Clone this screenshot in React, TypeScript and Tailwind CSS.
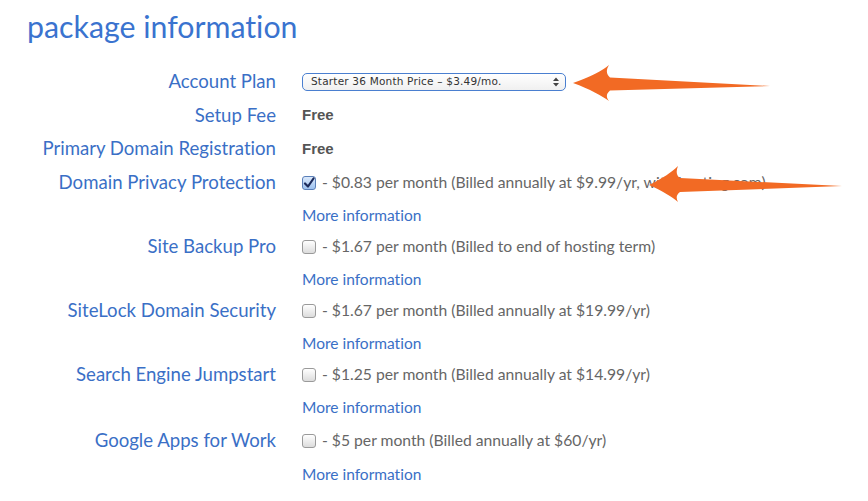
import React from "react";

const rows: { label: string; text: string; checked: boolean; extra: boolean }[] = [
  { label: "Domain Privacy Protection", text: "- $0.83 per month (Billed annually at $9.99/yr, with hosting.com)", checked: true, extra: false },
  { label: "Site Backup Pro", text: "- $1.67 per month (Billed to end of hosting term)", checked: false, extra: false },
  { label: "SiteLock Domain Security", text: "- $1.67 per month (Billed annually at $19.99/yr)", checked: false, extra: false },
  { label: "Search Engine Jumpstart", text: "- $1.25 per month (Billed annually at $14.99/yr)", checked: false, extra: false },
  { label: "Google Apps for Work", text: "- $5 per month (Billed annually at $60/yr)", checked: false, extra: true },
];

function Box({ checked }: { checked: boolean }) {
  return (
    <span
      className={
        checked
          ? "inline-flex items-center justify-center w-[14px] h-[14px] rounded-[3px] border border-[#5a7fb8] bg-gradient-to-b from-[#dbe9fb] to-[#9ec2ef] mr-[6px] shrink-0"
          : "inline-flex items-center justify-center w-[14px] h-[14px] rounded-[3px] border border-[#9a9a9a] bg-gradient-to-b from-white to-[#dcdcdc] mr-[6px] shrink-0"
      }
    >
      {checked && (
        <svg width="12" height="12" viewBox="0 0 12 12">
          <path d="M2 6.5 L5 9.5 L10.5 1.5" fill="none" stroke="#1c2a5a" strokeWidth="2.2" strokeLinecap="round" strokeLinejoin="round" />
        </svg>
      )}
    </span>
  );
}

export default function App() {
  return (
    <div className="relative w-[868px] h-[501px] bg-white overflow-hidden" style={{ fontFamily: "Lato, 'Open Sans', sans-serif", fontVariantLigatures: "none" }}>
      <h1 className="pl-[27px] pt-[5px] h-[65px] text-[30.3px] leading-[42px] text-[#3a73cf] font-normal">package information</h1>
      <div className="grid grid-cols-[276px_1fr] gap-x-[26px] text-[18.6px] text-[#3a6fc6]">
        <div className="h-[34px] flex items-center justify-end">Account Plan</div>
        <div className="h-[34px] flex items-center">
          <div className="w-[264px] h-[18px] rounded-[5px] border border-[#4a7fd0] bg-gradient-to-b from-white to-[#f0f0f0] flex items-center justify-between pl-[8px] pr-[6px] text-[11px] text-[#333]" style={{ fontFamily: "'DejaVu Sans', sans-serif" }}>
            <span className="text-[10.5px] tracking-[0.2px]">Starter 36 Month Price – $3.49/mo.</span>
            <svg width="6" height="10" viewBox="0 0 6 10"><path d="M0 4 L3 0.5 L6 4 Z M0 6 L3 9.5 L6 6 Z" fill="#444" /></svg>
          </div>
        </div>
        <div className="h-[33px] flex items-center justify-end">Setup Fee</div>
        <div className="h-[33px] flex items-center text-[15px] font-semibold text-[#555]" style={{ fontFamily: "'Liberation Sans', Arial, sans-serif" }}>Free</div>
        <div className="h-[34px] flex items-center justify-end">Primary Domain Registration</div>
        <div className="h-[34px] flex items-center text-[15px] font-semibold text-[#555]" style={{ fontFamily: "'Liberation Sans', Arial, sans-serif" }}>Free</div>
        {rows.map((r) => (
          <React.Fragment key={r.label}>
            <div className={r.extra ? "h-[35px] pt-[2px] flex items-center justify-end" : "h-[33px] flex items-center justify-end"}>{r.label}</div>
            <div className={r.extra ? "h-[35px] pt-[2px] flex items-center text-[15.7px] text-[#666] whitespace-nowrap" : "h-[33px] flex items-center text-[15.7px] text-[#666] whitespace-nowrap"}>
              <Box checked={r.checked} />
              <span>{r.text}</span>
            </div>
            <div className="h-[31px]" />
            <div className={r.extra ? "h-[31px] flex items-start text-[15.5px] text-[#3a6fc6] pt-[6px]" : "h-[31px] flex items-start text-[15.5px] text-[#3a6fc6] pt-[5px]"}>More information</div>
          </React.Fragment>
        ))}
      </div>
      <svg className="absolute left-0 top-0 pointer-events-none" width="868" height="501" viewBox="0 0 868 501">
        <path d="M573 83 C590 77 602 71 609 65 C606 70 606 74 610 77.5 L770 86 L610 90.5 C606 94 606 97 609 101 C602 96 590 89 573 83 Z" fill="#f26a24" />
        <path d="M649 185 C663 178 672 172 678 166 C676 171 676 175 680 178 L842 186 L680 192 C676 195 676 198 678 202 C672 197 663 191 649 185 Z" fill="#f26a24" />
      </svg>
    </div>
  );
}
